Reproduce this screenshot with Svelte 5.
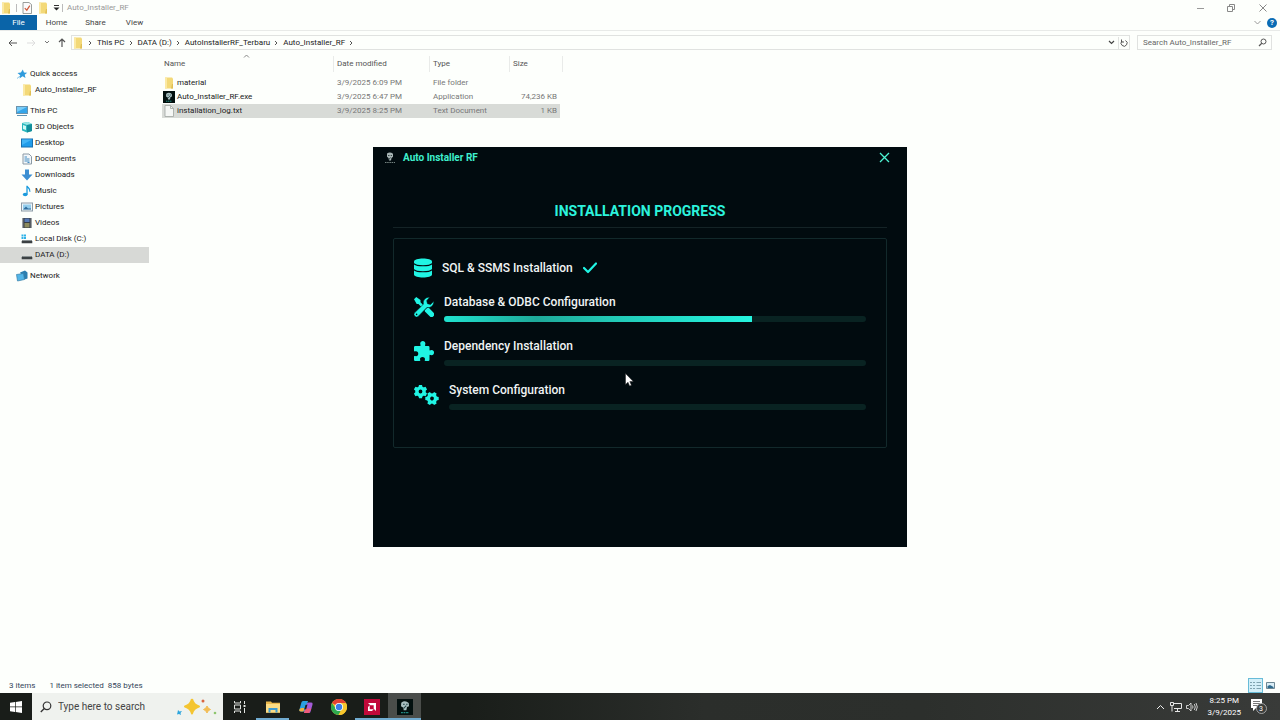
<script>
  // navigation pane
  const groups = [
    [
      { name: 'Quick access', icon: 'star', root: true },
      { name: 'Auto_Installer_RF', icon: 'folder' }
    ],
    [
      { name: 'This PC', icon: 'pc', root: true },
      { name: '3D Objects', icon: 'cube' },
      { name: 'Desktop', icon: 'desktop' },
      { name: 'Documents', icon: 'doc' },
      { name: 'Downloads', icon: 'download' },
      { name: 'Music', icon: 'music' },
      { name: 'Pictures', icon: 'picture' },
      { name: 'Videos', icon: 'video' },
      { name: 'Local Disk (C:)', icon: 'diskc' },
      { name: 'DATA (D:)', icon: 'disk' }
    ],
    [{ name: 'Network', icon: 'network', root: true }]
  ];
  let current = 'DATA (D:)';

  const crumbs = ['This PC', 'DATA (D:)', 'AutoInstallerRF_Terbaru', 'Auto_Installer_RF'];

  const files = [
    { name: 'material', icon: 'folder', date: '3/9/2025 6:09 PM', type: 'File folder', size: '' },
    { name: 'Auto_Installer_RF.exe', icon: 'app', date: '3/9/2025 6:47 PM', type: 'Application', size: '74,236 KB' },
    { name: 'installation_log.txt', icon: 'txt', date: '3/9/2025 8:25 PM', type: 'Text Document', size: '1 KB' }
  ];
  let selected = 'installation_log.txt';

  // installer steps
  const steps = [
    { name: 'SQL & SSMS Installation', icon: 'database', done: true },
    { name: 'Database & ODBC Configuration', icon: 'tools', value: 73 },
    { name: 'Dependency Installation', icon: 'puzzle', value: 0 },
    { name: 'System Configuration', icon: 'gears', value: 0 }
  ];

  const apps = [
    { name: 'Task View', icon: 'taskview' },
    { name: 'File Explorer', icon: 'explorer', running: true },
    { name: 'Copilot', icon: 'copilot' },
    { name: 'Google Chrome', icon: 'chrome' },
    { name: 'AMD Software', icon: 'amd', running: true },
    { name: 'Auto Installer RF', icon: 'app', running: true, active: true }
  ];

  const teeth = [0, 60, 120, 180, 240, 300];
</script>

{#snippet icon(name)}
  {#if name === 'folder'}
    <svg class="i12" viewBox="0 0 12 12"><path d="M2 .5h7l1 1v10H2z" fill="#f3d978" /><path d="M2 .5h2v11H2z" fill="#fbe9a4" /><path d="M9 7h1v4.500H8z" fill="#e0bf55" /></svg>
  {:else if name === 'star'}
    <svg class="i12" viewBox="0 0 12 12"><path d="M6.800 1.500 8 4.500l3.200.2-2.500 2 .8 3.300-2.900-1.700L3.500 10.500l.7-3.200L1.500 5l3.400-.4z" fill="#2f9bdc" /><path d="M1 10.500 4 8" stroke="#7fc3ea" /></svg>
  {:else if name === 'pc'}
    <svg class="i12" viewBox="0 0 12 12"><rect x=".5" y="1.500" width="11" height="7" fill="#35a6ea" stroke="#6b93ac" /><path d="M1 2h10L1 7z" fill="#79cdf8" /><path d="M1 10.500h10" stroke="#5c93b5" /></svg>
  {:else if name === 'desktop'}
    <svg class="i12" viewBox="0 0 12 12"><rect x=".5" y="2" width="11" height="8" fill="#1f9cea" stroke="#176fae" /><path d="M1 2.500h10L1 8z" fill="#42b4f5" /></svg>
  {:else if name === 'cube'}
    <svg class="i12" viewBox="0 0 12 12"><path d="M1 2 7 1l4 2v7l-5 1.500-5-2z" fill="#2ab7bd" /><path d="M1 2 7 1l4 2-5 1z" fill="#9be7e4" /><path d="M6 4v7.500l5-1.500V3z" fill="#148f9b" /><path d="M2 4l3 1v4L2 8z" fill="#d1fbf5" /></svg>
  {:else if name === 'doc'}
    <svg class="i12" viewBox="0 0 12 12"><path d="M2 1h6l2.500 2.500V11H2z" fill="#f2f7fa" stroke="#8b9aa5" /><path d="M3.500 4H6M3.500 6h5M3.500 8h5M6.500 9.500h2" stroke="#438dc1" /></svg>
  {:else if name === 'download'}
    <svg class="i12" viewBox="0 0 12 12"><path d="M4 .5h4v5h3.500L6 11.500.5 5.500H4z" fill="#3c8fd2" /></svg>
  {:else if name === 'music'}
    <svg class="i12" viewBox="0 0 12 12"><ellipse cx="4.200" cy="9.500" rx="2.400" ry="1.700" fill="#1b9bdd" /><path d="M6 9.500V.8c.5 2.200 3.800 2.500 2.800 6" fill="none" stroke="#1b9bdd" stroke-width="1.300" /></svg>
  {:else if name === 'picture'}
    <svg class="i12" viewBox="0 0 12 12"><rect x=".5" y="2" width="11" height="8" fill="#eef6fa" stroke="#8b9aa5" /><path d="M2 3.500h8v5H2z" fill="#93cdec" /><path d="m2 8.500 3-3 2 2h3v1z" fill="#2e6d9c" /></svg>
  {:else if name === 'video'}
    <svg class="i12" viewBox="0 0 12 12"><path d="M1.500 1h9v10h-9z" fill="#373d46" /><path d="M3.500 1.500h5V5h-5z" fill="#5478b5" /><path d="M3.500 6h5v4.500h-5z" fill="#8c8a5c" /><path d="M2.200 1.500v9.500M9.800 1.500v9.500" stroke="#a8adb2" stroke-width=".8" stroke-dasharray="1" /></svg>
  {:else if name === 'diskc' || name === 'disk'}
    <svg class="i12" viewBox="0 0 12 12"><path d="M1.500 7h9l.8 1.500v1.800H.7V8.500z" fill="#3b4143" /><path d="M1.500 7h9l.5 1H1z" fill="#899193" />{#if name === 'diskc'}<path d="M.5 1.500h2v2h-2zM3 1.500h2v2H3zM.5 4h2v2h-2zM3 4h2v2H3z" fill="#2fb2e8" />{/if}</svg>
  {:else if name === 'network'}
    <svg class="i12" viewBox="0 0 12 12"><path d="m4 2.500 5-2 2.500 2v6l-3 1z" fill="#2b7eb0" /><path d="m.5 4.500 7-1 1 6-7 1.500z" fill="#52b5e8" stroke="#367fa8" stroke-width=".7" /></svg>
  {:else if name === 'txt'}
    <svg class="i12" viewBox="0 0 12 12"><path d="M2 .5h5.500l3 3v8H2z" fill="#f5f7f5" stroke="#a0a5a1" stroke-width=".8" /><path d="M7.500.5v3h3" fill="none" stroke="#a0a5a1" stroke-width=".8" /></svg>
  {:else if name === 'app'}
    <svg class="i12" viewBox="0 0 12 12"><path d="M0 0h12v12H0z" fill="#03100f" /><path d="M3.200 2.800Q6 .5 8.800 3L9 5.500 7.500 6 7 8.500H5L4.800 6.500 3 5.500z" fill="#a9bfc0" /><path d="M4.500 4h1.300M6.800 4H8M5 7l2-2" stroke="#25474a" stroke-width=".8" /><path d="M3 10.200h6" stroke="#238a82" stroke-dasharray="1.400 .5" /></svg>
  {:else if name === 'check'}
    <svg class="i12" viewBox="0 0 12 12"><path d="M2 .5h6l2.500 2V11.500H2z" fill="#fbfbfb" stroke="#808783" stroke-width=".8" /><path d="m3.800 6.200 2 2 3-4.500" fill="none" stroke="#cf5a3b" stroke-width="1.200" /></svg>
  {:else if name === 'database'}
    <svg width="18" height="20" viewBox="0 0 18 20"><path d="M0 3.500C0-.5 18-.5 18 3.500v13c0 4-18 4-18 0z" fill="#20f5e4" /><path d="M0 5.500c2 3 16 3 18 0M0 11.500c2 3 16 3 18 0" fill="none" stroke="#010c10" stroke-width="1.200" /></svg>
  {:else if name === 'tools'}
    <svg width="20" height="20" viewBox="0 0 20 20"><path d="m0 2.200 2.200-2.200 4.300 3v2.300l3.300 3.400-1.900 1.900-3.400-3.700H2.700z" fill="#20f5e4" /><path d="m10.700 13.300 2.300-2.300 2 .1 4.400 4.500a2.600 2.600 0 0 1-3.700 3.700l-4.800-4.700z" fill="#20f5e4" /><path d="M15.700.2a5.700 5.700 0 0 0-6.300 7L.8 15.600a2.500 2.500 0 0 0 3.600 3.600l8.500-8.700a5.700 5.700 0 0 0 6.900-6.200l-3.300 3.200-3-.8-.8-3z" fill="#20f5e4" stroke="#010c10" stroke-width=".5" /><circle cx="2.600" cy="17.400" r=".8" fill="#010c10" /></svg>
  {:else if name === 'puzzle'}
    <svg width="20" height="20" viewBox="0 0 20 20"><path d="M0 6.200Q0 5 1.200 5H6c1.300 0 .3-1 .2-2.300 0-3.500 5.200-3.500 5.200 0 0 1.300-1.200 2.300.3 2.300h2.600Q15.500 5 15.500 6.200v2.600c0 1.500 1 .3 2.200.2 3.100 0 3.100 5.200 0 5.200-1.200 0-2.200-1.200-2.200.3v4.300q0 1.200-1.200 1.200h-2.800c-1.500 0-.5-1-.5-2 0-2.800-5-2.800-5 0 0 1 1 2-.5 2H1.200Q0 20 0 18.800V16c0-1.500 1-.7 2-.7 3 0 3-5.100 0-5.100-1 0-2 .8-2-.7z" fill="#20f5e4" /></svg>
  {:else if name === 'gears'}
    <svg width="25" height="20" viewBox="0 0 25 20">
      {#each [[6.5, 6.5, 0], [18, 13.5, 30]] as [x, y, turn]}
        <g transform="translate({x} {y}) rotate({turn})">
          <circle r="3.600" fill="none" stroke="#20f5e4" stroke-width="3.400" />
          {#each teeth as a}<path d="M-1.900-4.500-1.500-6.700H1.500L1.900-4.500z" transform="rotate({a})" fill="#20f5e4" />{/each}
        </g>
      {/each}
    </svg>
  {:else if name === 'taskview'}
    <svg class="i14" viewBox="0 0 14 14"><path d="M1.500 1v2h6V1M1.500 13v-2h6v2M1.500 5h6v4h-6zM11.500 1v3M11.500 8v5" fill="none" stroke="#dfe2df" /><path d="M10.500 5h2v2h-2z" fill="#dfe2df" /></svg>
  {:else if name === 'explorer'}
    <svg class="i14" viewBox="0 0 14 14"><path d="M0 1.500h5l1 1.200h8v10H0z" fill="#eab74c" /><path d="M0 4h14v8.500H0z" fill="#fbdc85" /><path d="M2.500 12.500V8h9v4.500h-2V10h-5v2.500z" fill="#3f9bd1" /></svg>
  {:else if name === 'copilot'}
    <svg class="i14" viewBox="0 0 14 14"><path d="M4 1h5l-2.500 9q-.5 1.500-2 1.500H2Q-.2 11.500.6 9L2.400 2.500Q2.800 1 4 1" fill="#29a0e0" /><path d="M2.400 8 .6 9q-.8 2.500 1.400 2.500h2.500l1-3.500z" fill="#f0b13c" /><path d="M10 13H5l2.500-9Q8 2.500 9.500 2.500H12q2.200 0 1.400 2.500l-1.800 6.500Q11.200 13 10 13" fill="#a45bd8" /><path d="M10 13H5l1.300-4.500h6z" fill="#ee5c78" /><path d="m6.500 5 2-.5-1.300 4.700-2 .4z" fill="#1b211c" /></svg>
  {:else if name === 'chrome'}
    <svg width="16" height="16" viewBox="0 0 16 16"><circle cx="8" cy="8" r="8" fill="#f6c52c" /><path d="M8 8 1 4A8 8 0 0 1 15 4z" fill="#e34133" /><path d="M1 4a8 8 0 0 0 6.500 12L11 9.800 5 10z" fill="#2da94f" /><path d="M8 4h7a8 8 0 0 1-7.500 12L11.500 9z" fill="#f6c52c" /><circle cx="8" cy="8" r="4" fill="#fff" /><circle cx="8" cy="8" r="3.200" fill="#3a7de8" /></svg>
  {:else if name === 'amd'}
    <svg width="16" height="16" viewBox="0 0 16 16"><path d="M0 0h16v16H0z" fill="#c1093a" /><path d="M4 4h8v8L9.700 9.700V6.300H6.300zM4 8l1.700-1.700v4h4L8 12H4z" fill="#fff" /></svg>
  {/if}
{/snippet}

<div class="screen">
  <main class="explorer">
    <header class="titlebar">
      <div class="quick">
        {@render icon('folder')}<span class="bar"></span>
        <button aria-label="Properties">{@render icon('check')}</button>
        <button aria-label="New folder">{@render icon('folder')}</button>
        <button aria-label="Customize"><svg width="7" height="6" viewBox="0 0 7 6"><path d="M1 .5h5" stroke="#333" /><path d="M.5 2.500h6l-3 3z" fill="#222" /></svg></button>
        <span class="bar"></span>
      </div>
      <span class="caption">Auto_Installer_RF</span>
      <div class="winbtns">
        <button aria-label="Minimize"><svg width="8" height="8" viewBox="0 0 8 8"><path d="M0 4.500h7" stroke="#999" /></svg></button>
        <button aria-label="Restore"><svg width="8" height="8" viewBox="0 0 8 8"><path d="M.5 2.500h5v5h-5zM2.500 2V.5h5v5H6" fill="none" stroke="#888" /></svg></button>
        <button aria-label="Close"><svg width="8" height="8" viewBox="0 0 8 8"><path d="m.5.5 7 7m0-7-7 7" stroke="#888" /></svg></button>
      </div>
    </header>

    <nav class="tabs" aria-label="Ribbon">
      <button class="file">File</button>
      <button>Home</button>
      <button>Share</button>
      <button>View</button>
      <div class="help">
        <button aria-label="Expand ribbon"><svg width="7" height="5" viewBox="0 0 7 5"><path d="m.5 1 3 3 3-3" fill="none" stroke="#999" /></svg></button>
        <button class="q" aria-label="Help">?</button>
      </div>
    </nav>

    <div class="address">
      <div class="navs">
        <button aria-label="Back"><svg width="10" height="8" viewBox="0 0 10 8"><path d="M9 4H1m3-3L1 4l3 3" fill="none" stroke="#555" /></svg></button>
        <button aria-label="Forward"><svg width="10" height="8" viewBox="0 0 10 8"><path d="M1 4h8M6 1l3 3-3 3" fill="none" stroke="#ddd" /></svg></button>
        <button class="small" aria-label="Recent"><svg width="6" height="5" viewBox="0 0 6 5"><path d="m1 1 2 2 2-2" fill="none" stroke="#777" /></svg></button>
        <button aria-label="Up"><svg width="8" height="9" viewBox="0 0 8 9"><path d="M4 9V1M1 4l3-3 3 3" fill="none" stroke="#555" stroke-width="1.200" /></svg></button>
      </div>
      <div class="path">
        {@render icon('folder')}
        {#each crumbs as c}
          <svg class="sep" viewBox="0 0 4 6"><path d="m1 1 2 2-2 2" fill="none" stroke="#555" /></svg>
          <button>{c}</button>
        {/each}
        <svg class="sep" viewBox="0 0 4 6"><path d="m1 1 2 2-2 2" fill="none" stroke="#555" /></svg>
        <button class="drop" aria-label="Previous locations"><svg width="7" height="5" viewBox="0 0 7 5"><path d="m1 1 2.500 2.500L6 1" fill="none" stroke="#444" stroke-width="1.200" /></svg></button>
        <button class="refresh" aria-label="Refresh"><svg width="8" height="8" viewBox="0 0 8 8"><path d="M5.500 1.500a3 3 0 1 1-3.500.5M1.500.5V3H4" fill="none" stroke="#555" /></svg></button>
      </div>
      <label class="search">
        <input type="text" aria-label="Search" placeholder="Search Auto_Installer_RF" />
        <svg width="9" height="9" viewBox="0 0 9 9"><circle cx="5.500" cy="3.500" r="2.500" fill="none" stroke="#555" /><path d="M3.800 5.300 1 8" stroke="#555" stroke-width="1.200" /></svg>
      </label>
    </div>

    <div class="body">
      <aside>
        {#each groups as g}
          <ul>
            {#each g as item}
              <li><button class="node" class:root={item.root} class:current={item.name === current}>{@render icon(item.icon)}{item.name}</button></li>
            {/each}
          </ul>
        {/each}
      </aside>

      <section class="list">
        <table>
          <thead>
            <tr>
              <th class="c-name">Name<svg class="sort" width="7" height="4" viewBox="0 0 7 4"><path d="m1 3.500 2.500-2.500L6 3.500" fill="none" stroke="#888" /></svg></th>
              <th class="c-date">Date modified</th>
              <th class="c-type">Type</th>
              <th class="c-size">Size</th>
            </tr>
          </thead>
          <tbody>
            {#each files as f}
              <tr class:selected={f.name === selected}>
                <td><span class="fname">{@render icon(f.icon)}{f.name}</span></td>
                <td>{f.date}</td>
                <td>{f.type}</td>
                <td>{f.size}</td>
              </tr>
            {/each}
          </tbody>
        </table>
      </section>
    </div>

    <footer class="status">
      <span>3 items</span>
      <span class="sel">1 item selected</span>
      <span>858 bytes</span>
      <div class="views">
        <button class="on" aria-label="Details"><svg width="13" height="11" viewBox="0 0 13 11"><path d="M1 2.500h2m1 0h2m1.500 0H12M1 5.500h2m1 0h2m1.500 0H12M1 8.500h2m1 0h2m1.500 0H12" stroke="#7fa3b0" /></svg></button>
        <button aria-label="Large icons"><svg width="9" height="7" viewBox="0 0 9 7"><path d="M.5.5h8v6h-8z" fill="#d9edf5" stroke="#6d8793" /><path d="M1.500 4 4 3l3.500 2v1h-6z" fill="#2d6a8d" /></svg></button>
      </div>
    </footer>

    <!-- installer window -->
    <div class="dialog" role="dialog" aria-labelledby="dlg-title">
      <div class="dlg-bar">
        <svg width="12" height="12" viewBox="0 0 12 12"><path d="M3 1.500Q6-.5 9 1.800v3L7.500 6 7 8.500H5L4.500 6 3 4.800z" fill="#a7b4b4" /><path d="M4 3.500h1.500M6.700 3.500H8M4.500 8l2-2.500" stroke="#1a2a2c" stroke-width=".8" /><path d="M1 10.500h10" stroke="#758381" stroke-dasharray="1.500 .7" /></svg>
        <span id="dlg-title">Auto Installer RF</span>
        <button aria-label="Close installer"><svg width="11" height="11" viewBox="0 0 11 11"><path d="m1 1 9 9m0-9-9 9" stroke="#4df5d4" stroke-width="1.300" /></svg></button>
      </div>
      <div class="dlg-body">
        <h1>INSTALLATION PROGRESS</h1>
        <ul class="steps">
          {#each steps as s}
            <li class:done={s.done}>
              {@render icon(s.icon)}
              {#if s.done}
                <span>{s.name}</span>
                <svg class="tick" width="14" height="12" viewBox="0 0 14 12"><path d="m1 6 4 4 8-8.500" fill="none" stroke="#20f5e4" stroke-width="2.200" stroke-linecap="round" stroke-linejoin="round" /></svg>
              {:else}
                <div class="step">
                  <span>{s.name}</span>
                  <div class="track" role="progressbar" aria-label={s.name} aria-valuenow={s.value} aria-valuemin="0" aria-valuemax="100">
                    <div class="fill" style={`width:${s.value}%`}></div>
                  </div>
                </div>
              {/if}
            </li>
          {/each}
        </ul>
      </div>
      <svg class="cursor" width="9" height="14" viewBox="0 0 9 14"><path d="M.5.5v11L3 9.200 4.600 13l1.800-.8L4.800 8.500h3.500z" fill="#fff" stroke="#222" stroke-width=".5" /></svg>
    </div>
  </main>

  <footer class="taskbar">
    <button class="start" aria-label="Start"><svg width="12" height="12" viewBox="0 0 12 12"><path d="m0 1.700 5-.7v4.600H0zM5.700.9 12 0v5.600H5.700zM0 6.300h5V11l-5-.7zM5.700 6.300H12V12l-6.300-.9z" fill="#fff" /></svg></button>
    <label class="tb-search">
      <svg width="12" height="12" viewBox="0 0 12 12"><circle cx="7" cy="4.800" r="3.800" fill="none" stroke="#333" stroke-width="1.200" /><path d="M4.300 7.500.8 11" stroke="#333" stroke-width="1.300" /></svg>
      <input type="text" aria-label="Taskbar search" placeholder="Type here to search" />
      <svg width="42" height="18" viewBox="0 0 42 18"><path d="M17 1Q18.500 7 24 8.500q-5.500 1.500-7 7-1.500-5.500-7-7Q15.500 7 17 1" fill="#f4c531" stroke="#f4c531" stroke-width="2" stroke-linejoin="round" /><path d="M32 8q.8 2.700 3.500 3.500-2.700.8-3.500 3.500-.8-2.700-3.500-3.500Q31.200 10.700 32 8" fill="#f2bd55" stroke="#f2bd55" /><path d="m3 12 1.500 1.500L7 13l-1.500 2 .5 2-2-1-2 .5.500-2z" fill="#2ba5dd" /><circle cx="28" cy="3" r="1.500" fill="#d9653f" /><circle cx="40" cy="15" r="1.300" fill="#8dc66e" /></svg>
    </label>
    {#each apps as a}
      <button class="tb-app" class:running={a.running} class:active={a.active} aria-label={a.name}>{@render icon(a.icon)}</button>
    {/each}
    <div class="tray">
      <button aria-label="Hidden icons"><svg width="9" height="6" viewBox="0 0 9 6"><path d="m1 5 3.500-3.500L8 5" fill="none" stroke="#eee" /></svg></button>
      <button aria-label="Network"><svg width="12" height="10" viewBox="0 0 12 10"><path d="M3 1.500h8.500v5H4M7.500 6.500V9M5 9.500h5M.5.500h3v3h-3zM2 3.500v6" fill="none" stroke="#e6e6e6" /></svg></button>
      <button aria-label="Volume"><svg width="12" height="10" viewBox="0 0 12 10"><path d="M.5 3.500h2L5 1v8L2.500 6.500h-2zM6.500 3.500q1 1.500 0 3M8.300 2q2 3 0 6M10 1q2.600 4 0 8" fill="none" stroke="#ddd" stroke-width=".9" /></svg></button>
      <div class="clock"><span>8:25 PM</span><span>3/9/2025</span></div>
      <button class="note" aria-label="Notifications"><svg width="18" height="17" viewBox="0 0 18 17"><path d="M1 1h11v9H6l-3 3v-3H1z" fill="#fff" /><path d="M3 3.500h7M3 5.500h7M3 7.500h5" stroke="#555" stroke-width=".8" /><circle cx="11.500" cy="10.500" r="5" fill="#3b3d3b" stroke="#bbb" stroke-width=".8" /></svg><b>3</b></button>
    </div>
  </footer>
</div>

<style>
  :global(body){ margin:0; background:#fdfffc; }

  .screen{
    display:flex; flex-direction:column; min-height:100vh;
    font-family:Roboto,'Noto Sans',sans-serif; font-size:8px; line-height:12px; color:#222;
  }
  button{
    display:flex; align-items:center; justify-content:center;
    border:0; padding:0; margin:0; background:none; color:inherit; font:inherit;
  }
  input{ border:0; padding:0; min-width:0; flex:1; background:none; font:inherit; color:#222; outline:none; }
  input::placeholder{ color:#666; opacity:1; }
  ul{ list-style:none; margin:0; padding:0; }
  svg{ flex:none; display:block; }
  .i12{ width:12px; height:12px; }
  .i14{ width:14px; height:14px; }

  .explorer{ position:relative; flex:1; display:flex; flex-direction:column; background:#fdfffc; }

  .titlebar{ display:flex; align-items:center; height:15px; }
  .quick{ display:flex; align-items:center; gap:4px; }
  .quick .bar{ width:1px; height:8px; background:#bbb; }
  .quick .bar:last-child{ margin-left:-2px; }
  .caption{ margin-left:4px; color:#999; }
  .winbtns{ margin-left:auto; display:flex; }
  .winbtns button{ width:30px; }
  .winbtns button:last-child{ width:34px; }

  .tabs{ display:flex; height:16px; box-sizing:border-box; border-bottom:1px solid #e8eae8; color:#444; }
  .tabs button{ width:39px; }
  .tabs .file{ width:37px; background:#0a64a8; color:#fff; }
  .help{ margin-left:auto; display:flex; align-items:center; gap:6px; padding-right:3px; }
  .help button{ width:8px; }
  .help .q{ width:10px; height:10px; border-radius:50%; background:#0a6cb5; color:#fff; font-weight:700; }

  .address{ display:flex; align-items:center; height:23px; padding-right:8px; }
  .navs{ display:flex; align-items:center; gap:8px; padding:0 5px 0 8px; }
  .navs .small{ width:6px; }
  .path{ flex:1; display:flex; align-items:center; height:15px; box-sizing:border-box; border:1px solid #e0e2e0; }
  .path .sep{ width:4px; height:6px; margin:0 5px 0 4px; }
  .path .drop{ margin-left:auto; width:14px; }
  .path .refresh{ width:11px; height:12px; border-left:1px solid #e0e2e0; }
  .search{ display:flex; align-items:center; width:135px; height:15px; box-sizing:border-box; margin-left:7px; padding:0 4px 0 5px; border:1px solid #e0e2e0; }

  .body{ flex:1; display:flex; padding-top:2px; }
  aside{ width:149px; padding-top:10px; }
  aside ul{ margin-bottom:5px; }
  .node{ width:100%; height:16px; justify-content:flex-start; gap:2px; padding-left:21px; }
  .node.root{ padding-left:16px; }
  .node.current{ background:#d7d9d6; }

  .list{ flex:1; padding-left:13px; }
  table{ table-layout:fixed; width:401px; border-spacing:0; }
  th{ height:16px; padding:0 0 0 3px; text-align:left; font-weight:400; color:#555; border-right:1px solid #e9ebe9; }
  td{ height:14px; padding:0 0 0 3px; color:#777; white-space:nowrap; }
  tbody::before{ content:''; display:block; height:4px; }
  .c-name{ position:relative; width:169px; padding-left:2px; }
  .c-date{ width:92px; }
  .c-type{ width:76px; }
  .sort{ position:absolute; left:81px; top:-2px; }
  td:first-child{ padding-left:1px; }
  td:last-child{ text-align:right; padding-right:3px; border-right:3px solid #fdfffc; }
  .fname{ display:flex; align-items:center; gap:2px; color:#222; }
  .selected td{ background:#d8dbd7; }

  .status{ display:flex; align-items:center; height:15px; padding:0 3px 0 9px; color:#33445a; }
  .status .sel{ margin:0 4px 0 14px; }
  .views{ margin-left:auto; display:flex; align-items:center; gap:2px; }
  .views button{ width:13px; height:13px; }
  .views .on{ background:#d3eff8; outline:1px solid #68bcd8; }

  .dialog{
    position:absolute; left:50%; top:50%; transform:translate(-50%,-50%);
    width:534px; height:400px; background:#010b0f; color:#f0f4f4;
    font-family:Roboto,sans-serif; font-size:12px; line-height:16px;
    display:flex; flex-direction:column;
  }
  .dlg-bar{ display:flex; align-items:center; gap:7px; height:22px; padding:0 17px 0 11px; color:#3ff0cd; font-size:10px; font-weight:700; }
  .dlg-bar button{ margin-left:auto; }
  .dlg-body{ padding:30px 20px 0; }
  h1{ margin:0 0 10px; padding-bottom:4px; border-bottom:1px solid #142326; color:#2cf3dd; font-size:14px; line-height:24px; font-weight:700; text-align:center; }
  .steps{ display:flex; flex-direction:column; gap:16px; min-height:168px; padding:20px; border:1px solid #12292b; border-radius:2px; }
  .steps li{ display:flex; align-items:center; gap:10px; height:28px; font-weight:500; }
  .steps li.done{ height:18px; }
  .step{ flex:1; display:flex; flex-direction:column; gap:6px; padding-top:2px; }
  .track{ height:6px; border-radius:3px; background:#092322; overflow:hidden; }
  .fill{ height:100%; background:linear-gradient(90deg,#20e2cf,#1ea999 30%,#22c9b6 55%,#25f5df); }
  .cursor{ position:absolute; left:252px; top:226px; }

  .taskbar{ display:flex; height:27px; background:linear-gradient(90deg,#191d19 36%,#2b2e2b 55%,#2c2f2c 72%,#393b39); color:#fff; }
  .start{ width:32px; }
  .tb-search{ display:flex; align-items:center; gap:6px; width:191px; box-sizing:border-box; padding:0 6px 0 8px; background:#eff2ee; font-size:10px; }
  .tb-search input::placeholder{ color:#444; }
  .tb-app{ width:33px; box-sizing:border-box; border-top:2px solid transparent; border-bottom:2px solid transparent; }
  .tb-app.running{ border-bottom-color:#70abd0; }
  .tb-app.active{ background:#4a4d4a; }
  .tb-app.active :global(svg){ width:16px; height:16px; }
  .tray{ margin-left:auto; display:flex; align-items:center; gap:4px; padding-right:12px; }
  .tray button{ width:12px; }
  .clock{ display:flex; flex-direction:column; align-items:center; padding:0 5px; }
  .tray .note{ position:relative; width:18px; }
  .note b{ position:absolute; left:9px; top:5px; font-size:7px; line-height:12px; font-weight:400; }
</style>
